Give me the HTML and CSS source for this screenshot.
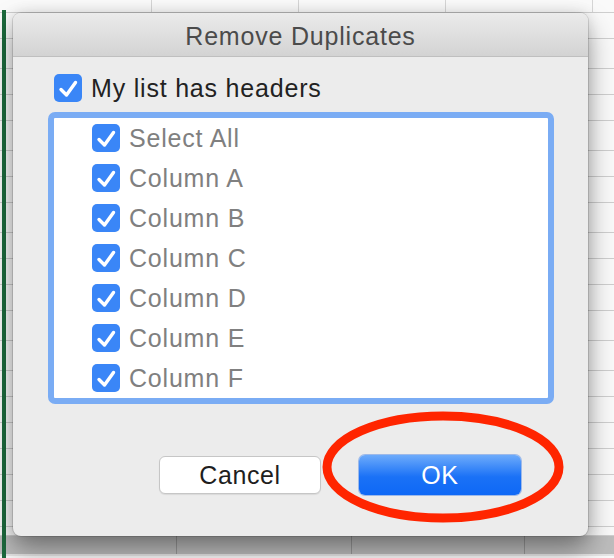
FILE: index.html
```html
<!DOCTYPE html>
<html lang="en">
<head>
    <meta charset="UTF-8">
    <meta name="viewport" content="width=device-width, initial-scale=1.0">
    <title>Remove Duplicates</title>
    <link rel="stylesheet" href="styles.css">
</head>

<body>
<div class="sheet">
    <div class="row" style="height: 13px"></div>
    <div class="row" style="height: 26px"></div>
    <div class="row" style="height: 30px"></div>
    <div class="row" style="height: 26px"></div>
    <div class="row" style="height: 26px"></div>
    <div class="row" style="height: 30px"></div>
    <div class="row" style="height: 26px"></div>
    <div class="row" style="height: 26px"></div>
    <div class="row" style="height: 30px"></div>
    <div class="row" style="height: 26px"></div>
    <div class="row" style="height: 26px"></div>
    <div class="row" style="height: 26px"></div>
    <div class="row" style="height: 30px"></div>
    <div class="row" style="height: 30px"></div>
    <div class="row" style="height: 26px"></div>
    <div class="row" style="height: 26px"></div>
    <div class="row" style="height: 26px"></div>
    <div class="row" style="height: 26px"></div>
    <div class="row" style="height: 26px"></div>
    <div class="row" style="height: 26px"></div>
    <div class="row" style="height: 9px"></div>
    <div class="strip">
        <span style="width: 171px"></span>
        <span style="width: 175px"></span>
        <span style="width: 173px"></span>
    </div>
    <div class="active-col"></div>
</div>

<div class="dialog">
    <div class="titlebar">Remove Duplicates</div>
    <div class="body">
        <label class="check header">
            <span class="box"><svg viewBox="0 0 28 28"><path d="M7 15.5 L12.5 21 L21.5 8.5"/></svg></span>
            My list has headers
        </label>
        <div class="list">
            <label class="check item"><span class="box"><svg viewBox="0 0 28 28"><path d="M7 15.5 L12.5 21 L21.5 8.5"/></svg></span>Select All</label>
            <label class="check item"><span class="box"><svg viewBox="0 0 28 28"><path d="M7 15.5 L12.5 21 L21.5 8.5"/></svg></span>Column A</label>
            <label class="check item"><span class="box"><svg viewBox="0 0 28 28"><path d="M7 15.5 L12.5 21 L21.5 8.5"/></svg></span>Column B</label>
            <label class="check item"><span class="box"><svg viewBox="0 0 28 28"><path d="M7 15.5 L12.5 21 L21.5 8.5"/></svg></span>Column C</label>
            <label class="check item"><span class="box"><svg viewBox="0 0 28 28"><path d="M7 15.5 L12.5 21 L21.5 8.5"/></svg></span>Column D</label>
            <label class="check item"><span class="box"><svg viewBox="0 0 28 28"><path d="M7 15.5 L12.5 21 L21.5 8.5"/></svg></span>Column E</label>
            <label class="check item"><span class="box"><svg viewBox="0 0 28 28"><path d="M7 15.5 L12.5 21 L21.5 8.5"/></svg></span>Column F</label>
        </div>
        <div class="buttons">
            <button class="btn cancel">Cancel</button>
            <button class="btn ok">OK</button>
        </div>
    </div>
</div>

<svg class="circle" width="250" height="120" viewBox="0 0 250 120">
    <ellipse cx="125" cy="60" rx="116" ry="51"/>
</svg>
</body>
</html>
```

FILE: styles.css
```css
* {
    margin: 0;
    padding: 0;
    box-sizing: border-box;
    font-family: 'Liberation Sans', Arial, sans-serif;
}

body {
    width: 614px;
    height: 558px;
    overflow: hidden;
    position: relative;
    background: #fff;
}

.sheet {
    position: relative;
    display: flex;
    flex-direction: column;
    height: 558px;
    background:
        repeating-linear-gradient(90deg, transparent 0 146px, #d6d6d6 146px 147px) 5px 0 / 100% 13px no-repeat,
        #fafafa;
}

.sheet .row {
    border-bottom: 1px solid #cfcfcf;
    flex-shrink: 0;
}

.sheet .strip {
    display: flex;
    height: 20px;
    padding-left: 6px;
    background: #bdbdbd;
    border-bottom: 2px solid #e6e6e6;
}

.sheet .strip span {
    border-right: 1px solid #999;
}

.sheet .active-col {
    position: absolute;
    left: 2px;
    top: 10px;
    width: 4px;
    height: 548px;
    background: #1d6a3d;
}

.dialog {
    position: absolute;
    left: 13px;
    top: 13px;
    width: 575px;
    height: 523px;
    background: #ececec;
    border-radius: 8px;
    overflow: hidden;
    box-shadow: 0 0 0 1px rgba(0,0,0,0.12), 0 14px 28px rgba(0,0,0,0.38), 0 0 14px rgba(0,0,0,0.12);
}

.titlebar {
    height: 44px;
    line-height: 47px;
    text-align: center;
    font-size: 25px;
    letter-spacing: 0.8px;
    color: #4b4b4b;
    background: linear-gradient(#ebebeb, #d3d3d3);
    border-bottom: 1px solid #bfbfbf;
}

.body {
    display: flex;
    flex-direction: column;
    padding: 17px 34px 0 35px;
}

.check {
    display: flex;
    align-items: center;
    gap: 9px;
    font-size: 25px;
    letter-spacing: 0.8px;
}

.check .box {
    width: 28px;
    height: 28px;
    border-radius: 5px;
    background: #3a86f7;
    display: flex;
}

.check .box svg {
    width: 28px;
    height: 28px;
    fill: none;
    stroke: #fff;
    stroke-width: 3.4;
    stroke-linecap: round;
    stroke-linejoin: round;
}

.check.header {
    margin-left: 6px;
    height: 28px;
    color: #222;
}

.list {
    margin-top: 10px;
    height: 292px;
    background: #fff;
    border: 6px solid #7aacf4;
    border-radius: 7px;
    padding: 0 0 0 38px;
}

.check.item {
    height: 40px;
    gap: 9px;
    color: #808080;
}

.buttons {
    display: flex;
    justify-content: flex-end;
    align-items: center;
    gap: 38px;
    margin-top: 51px;
    padding-right: 33px;
}

.btn {
    width: 162px;
    font-size: 25px;
    letter-spacing: 0.6px;
    border-radius: 6px;
    cursor: pointer;
}

.btn.cancel {
    height: 38px;
    background: #fff;
    color: #1e1e1e;
    border: 1px solid #c6c6c6;
    box-shadow: 0 1px 1px rgba(0,0,0,0.08);
}

.btn.ok {
    height: 40px;
    color: #fff;
    border: none;
    background: linear-gradient(#6dabfb, #1a71f6 55%, #0e68f6);
    box-shadow: 0 0 0 1px rgba(40,110,230,0.4);
}

.circle {
    position: absolute;
    left: 318px;
    top: 407px;
}

.circle ellipse {
    fill: none;
    stroke: #ff2500;
    stroke-width: 9;
}
```
